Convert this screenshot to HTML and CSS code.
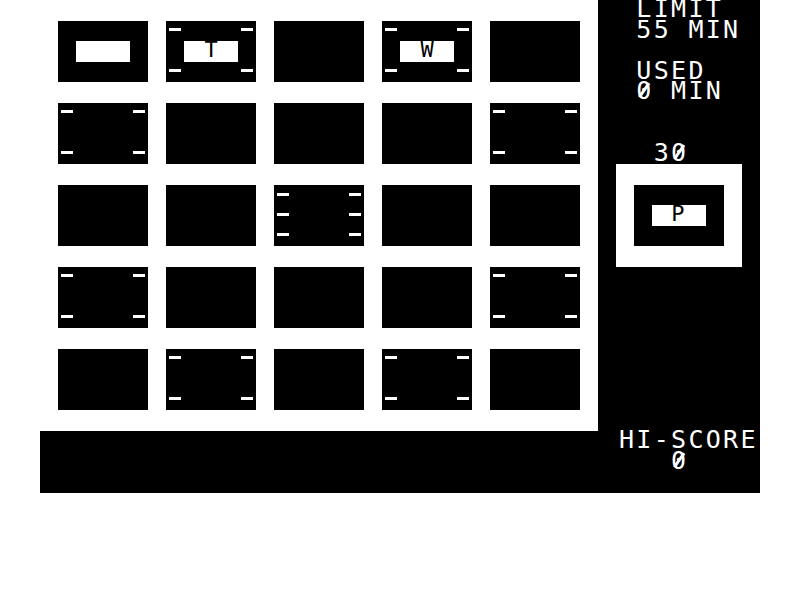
FILE: index.html
```html
<!DOCTYPE html>
<html>
<head>
<meta charset="utf-8">
<link rel="stylesheet" href="styles.css">
</head>
<body>
<div class="frame">
  <div class="board">
    <div class="card center"><div class="label"></div></div>
    <div class="card stack">
      <div class="dashes four"><div class="row"><i></i><i></i></div><div class="row"><i></i><i></i></div></div>
      <div class="face"><div class="label">T</div></div>
    </div>
    <div class="card"></div>
    <div class="card stack">
      <div class="dashes four"><div class="row"><i></i><i></i></div><div class="row"><i></i><i></i></div></div>
      <div class="face"><div class="label">W</div></div>
    </div>
    <div class="card"></div>

    <div class="card dashes four"><div class="row"><i></i><i></i></div><div class="row"><i></i><i></i></div></div>
    <div class="card"></div>
    <div class="card"></div>
    <div class="card"></div>
    <div class="card dashes four"><div class="row"><i></i><i></i></div><div class="row"><i></i><i></i></div></div>

    <div class="card"></div>
    <div class="card"></div>
    <div class="card dashes six"><div class="row"><i></i><i></i></div><div class="row"><i></i><i></i></div><div class="row"><i></i><i></i></div></div>
    <div class="card"></div>
    <div class="card"></div>

    <div class="card dashes four"><div class="row"><i></i><i></i></div><div class="row"><i></i><i></i></div></div>
    <div class="card"></div>
    <div class="card"></div>
    <div class="card"></div>
    <div class="card dashes four"><div class="row"><i></i><i></i></div><div class="row"><i></i><i></i></div></div>

    <div class="card"></div>
    <div class="card dashes four"><div class="row"><i></i><i></i></div><div class="row"><i></i><i></i></div></div>
    <div class="card"></div>
    <div class="card dashes four"><div class="row"><i></i><i></i></div><div class="row"><i></i><i></i></div></div>
    <div class="card"></div>
  </div>
  <div class="panel">
    <div class="stats">
      <div class="line"> LIMIT</div>
      <div class="line"> 55 MIN</div>
      <div class="line"> </div>
      <div class="line"> USED</div>
      <div class="line"> <span class="z">0</span> MIN</div>
      <div class="line"> </div>
      <div class="line"> </div>
      <div class="line">  3<span class="z">0</span></div>
    </div>
    <div class="preview">
      <div class="card center"><div class="label">P</div></div>
    </div>
    <div class="score">
      <div class="line">HI-SCORE</div>
      <div class="line">   <span class="z">0</span></div>
    </div>
  </div>
  <div class="bar"></div>
</div>
</body>
</html>
```

FILE: styles.css
```css
html, body {
  margin: 0;
  padding: 0;
  background: #ffffff;
}

.frame {
  margin-left: 40px;
  width: 720px;
  display: grid;
  grid-template-columns: 558px 162px;
  grid-template-rows: 431px 62px;
  background: #000000;
}

.board {
  grid-column: 1;
  grid-row: 1;
  background: #ffffff;
  padding: 21px 18px;
  display: grid;
  grid-template-columns: repeat(5, 90px);
  grid-auto-rows: 61px;
  column-gap: 18px;
  row-gap: 21px;
}

.card {
  width: 90px;
  height: 61px;
  background: #000000;
  box-sizing: border-box;
}

.card.center {
  display: flex;
  align-items: center;
  justify-content: center;
}

.card.stack {
  display: grid;
}

.card.stack > * {
  grid-area: 1 / 1;
}

.face {
  display: flex;
  align-items: center;
  justify-content: center;
}

.label {
  width: 54px;
  height: 21px;
  background: #ffffff;
  color: #000000;
  display: flex;
  justify-content: center;
  align-items: flex-start;
  font-family: "DejaVu Sans Mono", monospace;
  font-size: 22px;
  line-height: 17px;
}

.dashes {
  display: flex;
  flex-direction: column;
  justify-content: space-between;
  box-sizing: border-box;
  height: 61px;
}

.dashes.four {
  padding: 7px 3px 10px 3px;
}

.dashes.six {
  padding: 8px 3px 10px 3px;
}

.row {
  display: flex;
  justify-content: space-between;
}

.row i {
  display: block;
  width: 12px;
  height: 3px;
  background: #ffffff;
}

.panel {
  grid-column: 2;
  grid-row: 1 / span 2;
  display: flex;
  flex-direction: column;
  color: #ffffff;
  font-family: "DejaVu Sans Mono", monospace;
  font-size: 25px;
  letter-spacing: 2.3px;
}

.line {
  height: 20.5px;
  line-height: 20.5px;
  white-space: pre;
  padding-left: 21px;
}

.z {
  position: relative;
}

.z::after {
  content: "";
  position: absolute;
  left: 7.5px;
  top: 14px;
  width: 2.5px;
  height: 17px;
  background: currentColor;
  transform: translate(-50%, -50%) rotate(35deg);
}

.stats {
  margin-top: -1px;
}

.preview {
  margin-top: 1px;
  margin-left: 18px;
  width: 126px;
  height: 103px;
  box-sizing: border-box;
  padding: 21px 18px;
  background: #ffffff;
}

.score {
  margin-top: 163px;
}

.bar {
  grid-column: 1;
  grid-row: 2;
  background: #000000;
}
```
